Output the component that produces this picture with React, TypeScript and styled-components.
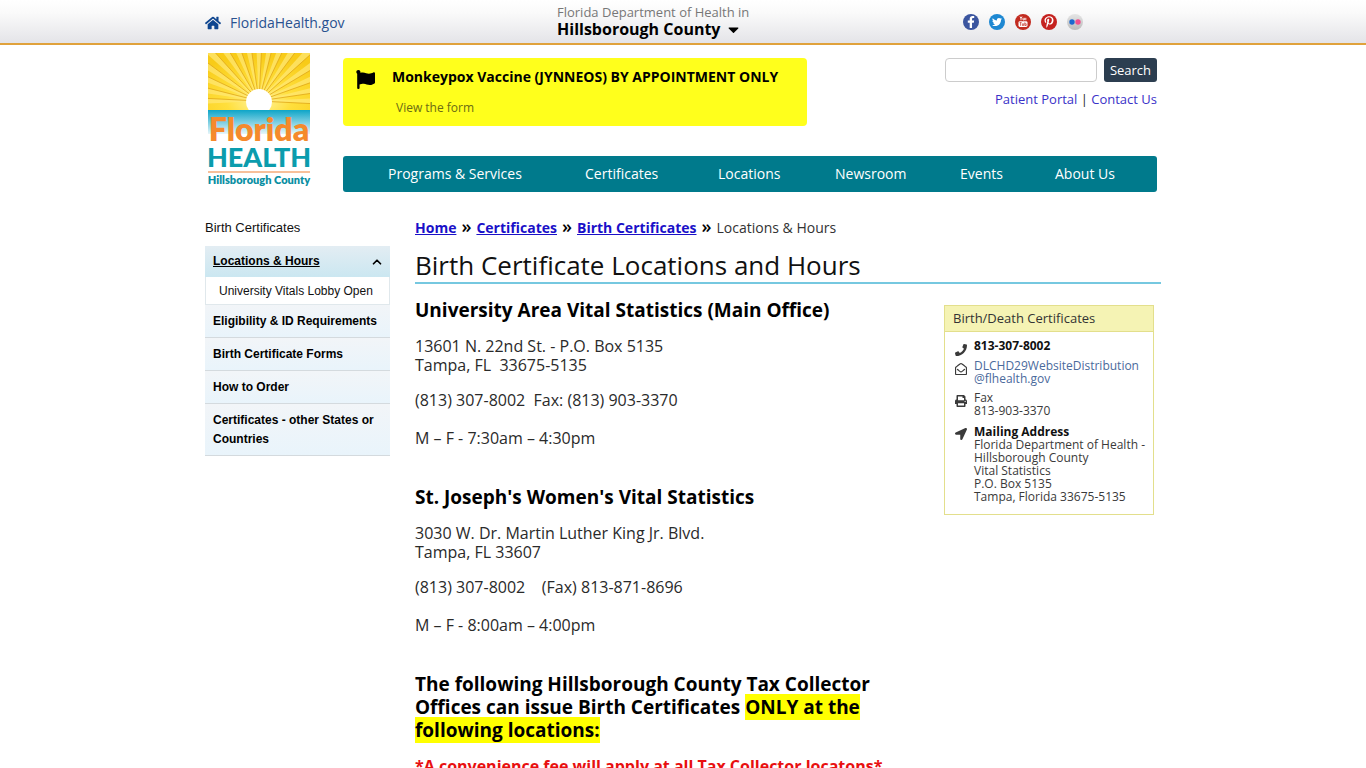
import React from "react";
import styled, { createGlobalStyle } from "styled-components";
import { FaHome, FaFlag, FaPhone, FaRegEnvelopeOpen, FaPrint, FaLocationArrow, FaCaretDown, FaFacebookF, FaTwitter, FaPinterestP } from "react-icons/fa";
import { ChevronUp } from "lucide-react";

const sans = `"Open Sans", "Noto Sans", sans-serif`;
const arial = `"Liberation Sans", Arial, sans-serif`;

const GlobalStyle = createGlobalStyle`
  *, *::before, *::after { box-sizing: border-box; }
  body { margin: 0; background: #fff; color: #222; font-family: ${sans}; }
  a { text-decoration: none; }
  h1, h2, h3, p, ul, ol { margin: 0; padding: 0; }
  ul, ol { list-style: none; }
`;

const Container = styled.div`
  max-width: 956px;
  margin: 0 auto;
`;

const TopBar = styled.div`
  background: linear-gradient(#fff, #fafafa 30%, #e4e4e8);
  border-bottom: 2px solid #e0a23c;
`;
const TopInner = styled(Container)`
  display: grid;
  grid-template-columns: 352px 406px 1fr;
  align-items: center;
  height: 43px;
`;
const HomeLink = styled.a`
  display: flex;
  align-items: center;
  gap: 9px;
  padding-top: 2px;
  color: #2a5290;
  font-size: 14px;
  svg { font-size: 16px; color: #0f4690; }
`;
const CountyPicker = styled.button`
  justify-self: start;
  border: 0;
  padding: 0;
  background: none;
  font-family: ${sans};
  text-align: center;
  cursor: pointer;
`;
const Department = styled.span`
  display: block;
  font-size: 13px;
  line-height: 15px;
  color: #777;
`;
const County = styled.span`
  display: flex;
  align-items: center;
  gap: 5px;
  font-size: 16px;
  line-height: 18px;
  font-weight: 700;
  color: #000;
  svg { font-size: 17px; }
`;
const Socials = styled.div`
  display: flex;
  gap: 10px;
`;
const Social = styled.a<{ $bg: string }>`
  display: flex;
  align-items: center;
  justify-content: center;
  width: 16px;
  height: 16px;
  border-radius: 50%;
  overflow: hidden;
  background: ${(p) => p.$bg};
  color: #fff;
  font-size: 12px;
`;

const Masthead = styled(Container)`
  display: flex;
  padding: 8px 4px 0 2px;
`;
const LogoLink = styled.a`
  flex: 0 0 136px;
  svg { display: block; }
`;
const MastBody = styled.div`
  flex: 1;
  padding-top: 5px;
`;
const MastTop = styled.div`
  display: flex;
  justify-content: space-between;
  align-items: flex-start;
`;
const Alert = styled.section`
  display: flex;
  gap: 17px;
  width: 464px;
  height: 68px;
  padding: 9px 13px;
  border-radius: 4px;
  background: #ffff1c;
  color: #000;
  svg { flex: none; margin-top: 3px; }
`;
const AlertTitle = styled.h2`
  font-size: 14px;
  line-height: 20px;
  font-weight: 700;
  white-space: nowrap;
`;
const AlertLink = styled.a`
  display: block;
  padding: 13px 0 0 4px;
  font-size: 12px;
  line-height: 16px;
  color: #6b6b14;
`;
const SearchArea = styled.div`
  display: flex;
  flex-direction: column;
  align-items: flex-end;
  gap: 8px;
`;
const SearchForm = styled.form`
  display: flex;
  gap: 7px;
`;
const SearchInput = styled.input`
  width: 152px;
  height: 24px;
  border: 1px solid #ccc;
  border-radius: 4px;
  font: 13px ${sans};
`;
const SearchButton = styled.button`
  width: 53px;
  height: 24px;
  padding: 0;
  border: 0;
  border-radius: 3px;
  background: #2c3e50;
  color: #fff;
  font: 13px ${sans};
`;
const QuickLinks = styled.div`
  font-size: 13px;
  line-height: 18px;
  a { color: #3a32c8; }
`;
const Nav = styled.nav`
  margin-top: 30px;
  display: grid;
  grid-template-columns: 197fr 133fr 117fr 125fr 95fr 102fr;
  align-items: center;
  height: 36px;
  padding: 0 0 2px 45px;
  border-radius: 3px;
  background: #007a8c;
`;
const NavLink = styled.a`
  color: #fff;
  font-size: 14px;
  font-weight: 500;
  white-space: nowrap;
`;

const Columns = styled(Container)`
  display: flex;
  gap: 25px;
  padding-top: 26px;
`;
const Sidebar = styled.nav`
  flex: 0 0 185px;
  font-family: ${arial};
  font-size: 12px;
`;
const SideTitle = styled.h2`
  font-size: 13px;
  line-height: 20px;
  font-weight: 400;
  color: #111;
  margin-bottom: 8px;
`;
const SideItem = styled.a<{ $current?: boolean }>`
  display: flex;
  justify-content: space-between;
  align-items: center;
  padding: ${(p) => (p.$current ? "6px 6px 6px 8px" : "7px 8px 6px")};
  border-bottom: ${(p) => (p.$current ? "0" : "1px solid #d4dade")};
  background: ${(p) => (p.$current ? "linear-gradient(#e3edf3, #cbe7f1)" : "linear-gradient(#f2f5f8, #e9f4fb)")};
  color: #000;
  font-weight: 700;
  line-height: 19px;
  text-decoration: ${(p) => (p.$current ? "underline" : "none")};
`;
const SubItem = styled.a`
  display: block;
  padding: 5px 13px 3px;
  border: 1px solid #e0e8ec;
  border-top: 0;
  line-height: 19px;
  color: #111;
`;

const Main = styled.main`
  flex: 1;
  min-width: 0;
`;
const Crumbs = styled.nav`
  display: flex;
  align-items: center;
  font-size: 14px;
  line-height: 19px;
  color: #333;
  a { font-weight: 700; color: #1a10c8; text-decoration: underline; }
`;
const CrumbMark = styled.span`
  margin: 0 5px;
  padding-bottom: 2px;
  font-size: 18px;
  line-height: 17px;
  font-weight: 600;
  color: #000;
`;
const PageTitle = styled.h1`
  margin-top: 11px;
  border-bottom: 2px solid #76c8e0;
  font-size: 26px;
  line-height: 34px;
  font-weight: 400;
  color: #111;
`;
const ContentRow = styled.div`
  display: flex;
  justify-content: space-between;
  align-items: flex-start;
  padding: 15px 7px 0 0;
`;
const Article = styled.article`
  width: 476px;
`;
const Office = styled.section`
  margin-bottom: 38px;
`;
const OfficeName = styled.h3`
  margin-bottom: 15px;
  font-size: 19px;
  line-height: 23px;
  font-weight: 700;
  color: #000;
`;
const Text = styled.p<{ $fee?: boolean }>`
  margin-bottom: 16px;
  font-size: 16px;
  line-height: 19px;
  font-weight: ${(p) => (p.$fee ? 700 : 400)};
  color: ${(p) => (p.$fee ? "#e81010" : "#2a2a2a")};
`;
const Highlight = styled.mark`
  background: #ff0;
  color: #000;
`;

const Card = styled.aside`
  width: 210px;
  margin-top: 6px;
  border: 1px solid #e3df8c;
  padding-bottom: 11px;
`;
const CardTitle = styled.h2`
  padding: 3px 8px 4px;
  border-bottom: 1px solid #e3df8c;
  background: #f5f3b4;
  font-size: 13px;
  line-height: 18px;
  font-weight: 400;
  color: #333;
`;
const Contact = styled.div<{ $top: number; $drop?: number }>`
  display: flex;
  gap: 7px;
  padding: ${(p) => p.$top}px 3px 0 10px;
  font-size: 12px;
  line-height: 13px;
  color: #3a3a3a;
  svg { flex: none; margin-top: ${(p) => p.$drop ?? 3}px; font-size: 12px; }
  strong { display: block; font-weight: 700; color: #111; }
  a { color: #4a6a9c; }
`;

const rays = Array.from({ length: 17 }, (_, i) => {
  const a = Math.PI + (i * Math.PI) / 16 - 0.05;
  return [a, a + 0.1];
});

const Logo = () => (
  <svg width="104" height="138" viewBox="0 0 104 138" role="img" aria-label="Florida Health Hillsborough County">
    <defs>
      <radialGradient id="sky" cx="0.5" cy="0.85" r="0.8">
        <stop offset="0" stopColor="#fff3a0" />
        <stop offset="0.4" stopColor="#ffdf3c" />
        <stop offset="1" stopColor="#f8cb18" />
      </radialGradient>
      <linearGradient id="sea" x1="0" y1="0" x2="0" y2="1">
        <stop offset="0" stopColor="#0ea5c8" />
        <stop offset="1" stopColor="#e6f6fa" />
      </linearGradient>
      <clipPath id="skyClip"><rect x="1" y="0" width="102" height="57" /></clipPath>
    </defs>
    <rect x="1" y="0" width="102" height="57" fill="url(#sky)" />
    <g clipPath="url(#skyClip)">
      {rays.map(([a, b], i) => (
        <g key={i}>
          <path
            d={`M52 48 L${52 + Math.cos(a) * 95} ${48 + Math.sin(a) * 95} L${52 + Math.cos(b) * 95} ${48 + Math.sin(b) * 95} Z`}
            fill="#ffe878"
            opacity="0.7"
          />
          <path
            d={`M52 48 L${52 + Math.cos(b) * 95} ${48 + Math.sin(b) * 95}`}
            stroke="#dfa414"
            opacity="0.75"
          />
        </g>
      ))}
      <circle cx="52" cy="49" r="13" fill="#fff" />
    </g>
    <rect x="1" y="57" width="102" height="24" fill="url(#sea)" />
    <text x="52" y="88" textAnchor="middle" fontFamily="Lato, sans-serif" fontWeight="800" fontSize="32" fill="#f58a2c">Florida</text>
    <text x="52" y="114" textAnchor="middle" fontFamily="Lato, sans-serif" fontWeight="900" fontSize="27" fill="#0b9cad">HEALTH</text>
    <rect x="1" y="118" width="102" height="2" fill="#f7c09a" />
    <text x="52" y="131" textAnchor="middle" fontFamily="Lato, sans-serif" fontWeight="800" fontSize="11" fill="#0b8fa3">Hillsborough County</text>
  </svg>
);

const YouTubeMark = () => (
  <svg width="16" height="16" viewBox="0 0 16 16" fill="none" stroke="#fff">
    <path d="M5 2.5 L6 4.5 L7 2.5 M6 4.5 V6.3 M8 3.8 V6 M8.2 6 H9.3 V3.8 M10.8 3.8 V6.3" strokeWidth="0.9" />
    <rect x="3.5" y="7.2" width="9" height="5.8" rx="1.4" fill="#fff" stroke="none" />
    <path d="M4.6 8.6 H6.6 M5.6 8.6 V11.8 M7.4 9.4 V11.5 H8.6 V9.4 M9.8 8.4 V11.5 H11.2 V9.8 H9.8" stroke="#c22b20" strokeWidth="0.7" />
  </svg>
);

const navItems = ["Programs & Services", "Certificates", "Locations", "Newsroom", "Events", "About Us"];
const sideItems = ["Eligibility & ID Requirements", "Birth Certificate Forms", "How to Order", "Certificates - other States or Countries"];

export default function App() {
  return (
    <>
      <GlobalStyle />
      <TopBar>
        <TopInner>
          <HomeLink href="#"><FaHome />FloridaHealth.gov</HomeLink>
          <CountyPicker type="button">
            <Department>Florida Department of Health in</Department>
            <County>Hillsborough County <FaCaretDown /></County>
          </CountyPicker>
          <Socials>
            <Social href="#" aria-label="Facebook" $bg="#3b559f"><FaFacebookF /></Social>
            <Social href="#" aria-label="Twitter" $bg="#1e88d2"><FaTwitter size={10} /></Social>
            <Social href="#" aria-label="YouTube" $bg="#c22b20"><YouTubeMark /></Social>
            <Social href="#" aria-label="Pinterest" $bg="#c5221f"><FaPinterestP /></Social>
            <Social href="#" aria-label="Flickr" $bg="linear-gradient(#e6e6e6, #bbb)">
              <svg width="16" height="16" viewBox="0 0 16 16"><circle cx="5" cy="8" r="2.7" fill="#1b68cf" /><circle cx="11" cy="8" r="2.7" fill="#f0508e" /></svg>
            </Social>
          </Socials>
        </TopInner>
      </TopBar>

      <Masthead as="header">
        <LogoLink href="#"><Logo /></LogoLink>
        <MastBody>
          <MastTop>
            <Alert>
              <FaFlag size={19} />
              <div>
                <AlertTitle>Monkeypox Vaccine (JYNNEOS) BY APPOINTMENT ONLY</AlertTitle>
                <AlertLink href="#">View the form</AlertLink>
              </div>
            </Alert>
            <SearchArea>
              <SearchForm role="search">
                <SearchInput type="text" aria-label="Search" />
                <SearchButton type="button">Search</SearchButton>
              </SearchForm>
              <QuickLinks><a href="#">Patient Portal</a> | <a href="#">Contact Us</a></QuickLinks>
            </SearchArea>
          </MastTop>
          <Nav>
            {navItems.map((n) => <NavLink href="#" key={n}>{n}</NavLink>)}
          </Nav>
        </MastBody>
      </Masthead>

      <Columns>
        <Sidebar>
          <SideTitle>Birth Certificates</SideTitle>
          <SideItem href="#" $current>Locations &amp; Hours<ChevronUp size={14} strokeWidth={3} /></SideItem>
          <SubItem href="#">University Vitals Lobby Open</SubItem>
          {sideItems.map((s) => <SideItem href="#" key={s}>{s}</SideItem>)}
        </Sidebar>
        <Main>
          <Crumbs>
            <a href="#">Home</a><CrumbMark>»</CrumbMark>
            <a href="#">Certificates</a><CrumbMark>»</CrumbMark>
            <a href="#">Birth Certificates</a><CrumbMark>»</CrumbMark>
            <span>Locations &amp; Hours</span>
          </Crumbs>
          <PageTitle>Birth Certificate Locations and Hours</PageTitle>
          <ContentRow>
            <Article>
              <Office>
                <OfficeName>University Area Vital Statistics (Main Office)</OfficeName>
                <Text>13601 N. 22nd St. - P.O. Box 5135<br />Tampa, FL{"\u00a0 "}33675-5135</Text>
                <Text>(813) 307-8002{"\u00a0 "}Fax: (813) 903-3370<br /><br />M – F - 7:30am – 4:30pm</Text>
              </Office>
              <Office>
                <OfficeName>St. Joseph's Women's Vital Statistics</OfficeName>
                <Text>3030 W. Dr. Martin Luther King Jr. Blvd.<br />Tampa, FL 33607</Text>
                <Text>(813) 307-8002{"\u00a0\u00a0\u00a0 "}(Fax) 813-871-8696<br /><br />M – F - 8:00am – 4:00pm</Text>
              </Office>
              <Office>
                <OfficeName>The following Hillsborough County Tax Collector Offices can issue Birth Certificates <Highlight>ONLY at the following locations:</Highlight></OfficeName>
                <Text $fee>*A convenience fee will apply at all Tax Collector locatons*</Text>
              </Office>
            </Article>
            <Card>
              <CardTitle>Birth/Death Certificates</CardTitle>
              <Contact $top={7} $drop={5}><FaPhone /><strong>813-307-8002</strong></Contact>
              <Contact $top={3} $drop={4}><FaRegEnvelopeOpen /><a href="#">DLCHD29WebsiteDistribution<br />@flhealth.gov</a></Contact>
              <Contact $top={6} $drop={4}><FaPrint /><span>Fax<br />813-903-3370</span></Contact>
              <Contact $top={8}>
                <FaLocationArrow />
                <span><strong>Mailing Address</strong>Florida Department of Health - Hillsborough County<br />Vital Statistics<br />P.O. Box 5135<br />Tampa, Florida 33675-5135</span>
              </Contact>
            </Card>
          </ContentRow>
        </Main>
      </Columns>
    </>
  );
}
